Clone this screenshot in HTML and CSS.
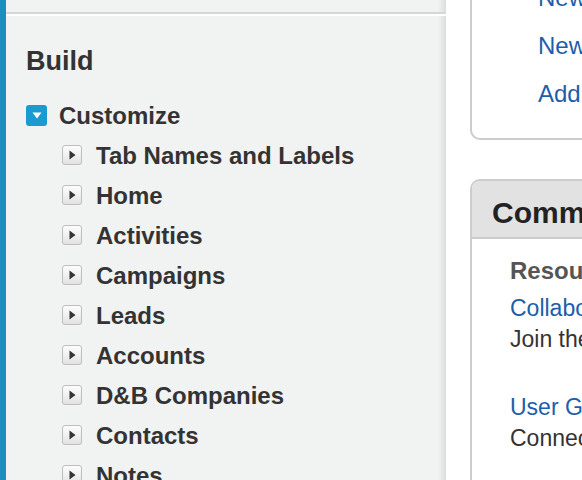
FILE: index.html
```html
<!DOCTYPE html>
<html>
<head>
<meta charset="utf-8">
<link rel="stylesheet" href="styles.css">
</head>
<body>
<div class="page">
  <div class="stripe"></div>
  <aside class="sidebar">
    <div class="prev-section"></div>
    <h2 class="build">Build</h2>
    <div class="group">
      <div class="group-row">
        <span class="toggle-open"><svg width="10" height="7" viewBox="0 0 10 7"><path d="M0.5 0.5 L9.5 0.5 L5 6.5 Z" fill="#fff"/></svg></span>
        <span class="group-label">Customize</span>
      </div>
      <ul class="items">
        <li class="item"><span class="toggle"><svg width="7" height="10" viewBox="0 0 7 10"><path d="M0.5 0.5 L6.5 5 L0.5 9.5 Z" fill="#333"/></svg></span><span>Tab Names and Labels</span></li>
        <li class="item"><span class="toggle"><svg width="7" height="10" viewBox="0 0 7 10"><path d="M0.5 0.5 L6.5 5 L0.5 9.5 Z" fill="#333"/></svg></span><span>Home</span></li>
        <li class="item"><span class="toggle"><svg width="7" height="10" viewBox="0 0 7 10"><path d="M0.5 0.5 L6.5 5 L0.5 9.5 Z" fill="#333"/></svg></span><span>Activities</span></li>
        <li class="item"><span class="toggle"><svg width="7" height="10" viewBox="0 0 7 10"><path d="M0.5 0.5 L6.5 5 L0.5 9.5 Z" fill="#333"/></svg></span><span>Campaigns</span></li>
        <li class="item"><span class="toggle"><svg width="7" height="10" viewBox="0 0 7 10"><path d="M0.5 0.5 L6.5 5 L0.5 9.5 Z" fill="#333"/></svg></span><span>Leads</span></li>
        <li class="item"><span class="toggle"><svg width="7" height="10" viewBox="0 0 7 10"><path d="M0.5 0.5 L6.5 5 L0.5 9.5 Z" fill="#333"/></svg></span><span>Accounts</span></li>
        <li class="item"><span class="toggle"><svg width="7" height="10" viewBox="0 0 7 10"><path d="M0.5 0.5 L6.5 5 L0.5 9.5 Z" fill="#333"/></svg></span><span>D&amp;B Companies</span></li>
        <li class="item"><span class="toggle"><svg width="7" height="10" viewBox="0 0 7 10"><path d="M0.5 0.5 L6.5 5 L0.5 9.5 Z" fill="#333"/></svg></span><span>Contacts</span></li>
        <li class="item"><span class="toggle"><svg width="7" height="10" viewBox="0 0 7 10"><path d="M0.5 0.5 L6.5 5 L0.5 9.5 Z" fill="#333"/></svg></span><span>Notes</span></li>
      </ul>
    </div>
  </aside>
  <main class="main">
    <section class="card quick">
      <a class="quick-link" href="#">New User</a>
      <a class="quick-link" href="#">New Custom Object</a>
      <a class="quick-link" href="#">Add Fields</a>
    </section>
    <section class="card community">
      <header class="card-head">Community</header>
      <div class="card-body">
        <h3 class="res-title">Resources</h3>
        <div class="entry">
          <a class="entry-link" href="#">Collaboration Community</a>
          <div class="entry-desc">Join the conversation</div>
        </div>
        <div class="entry">
          <a class="entry-link" href="#">User Groups</a>
          <div class="entry-desc">Connect with other users</div>
        </div>
      </div>
    </section>
  </main>
</div>
</body>
</html>
```

FILE: styles.css
```css
html, body {
  margin: 0;
  padding: 0;
  background: #fff;
  overflow: hidden;
}
body {
  font-family: "Liberation Sans", Arial, sans-serif;
  color: #333;
  width: 582px;
  height: 480px;
}
.page {
  display: flex;
  align-items: flex-start;
  height: 480px;
}
.stripe {
  width: 6px;
  flex: 0 0 6px;
  align-self: stretch;
  background: #1b8ebd;
}
.sidebar {
  flex: 0 0 440px;
  align-self: stretch;
  background: linear-gradient(to right, #f1f2f2 0, #f1f2f2 432px, #e9eaea 435px, #dcdcdc 440px);
  padding-left: 20px;
  box-sizing: border-box;
}
.prev-section {
  height: 12px;
  margin-left: -20px;
  border-bottom: 2px solid #d6d6d6;
  box-shadow: 0 2px 0 #fff;
}
.build {
  margin: 31px 0 0 0;
  font-size: 27px;
  line-height: 32px;
  font-weight: bold;
  color: #333;
}
.group {
  margin-top: 19px;
}
.group-row {
  display: flex;
  align-items: center;
  height: 40px;
}
.toggle-open {
  width: 21px;
  height: 21px;
  border-radius: 3px;
  background: #1a9ad0;
  display: flex;
  align-items: center;
  justify-content: center;
  margin-right: 12px;
  margin-top: -2px;
}
.toggle-open svg { margin-top: 1px; }
.group-label {
  font-size: 24px;
  font-weight: bold;
}
.items {
  list-style: none;
  margin: 0;
  padding: 0 0 0 36px;
}
.item {
  display: flex;
  align-items: center;
  height: 40px;
  font-size: 24px;
  font-weight: bold;
  white-space: nowrap;
}
.toggle {
  width: 18px;
  height: 18px;
  border: 1px solid #bdbdbd;
  border-radius: 3px;
  background: linear-gradient(#fdfdfd, #e2e2e2);
  display: flex;
  align-items: center;
  justify-content: center;
  margin-right: 14px;
  margin-top: -3px;
}
.toggle svg { margin-left: 1px; }
.main {
  margin-left: 24px;
  width: 600px;
  flex: 0 0 600px;
  margin-top: -46px;
}
.card {
  border: 2px solid #cccccc;
  border-right: none;
  border-radius: 10px 0 0 10px;
  background: #fff;
}
.quick {
  display: flex;
  flex-direction: column;
  padding: 20px 0 20px 66px;
  border-top: none;
  border-radius: 0 0 0 10px;
}
.quick-link {
  font-size: 24px;
  line-height: 48px;
  color: #1b5eab;
  text-decoration: none;
  white-space: nowrap;
}
.community {
  margin-top: 39px;
  border-bottom: none;
  border-radius: 10px 0 0 0;
}
.card-head {
  background: #e2e2e2;
  border-radius: 8px 0 0 0;
  border-bottom: 2px solid #cccccc;
  height: 56px;
  line-height: 64px;
  padding-left: 20px;
  font-size: 30px;
  font-weight: bold;
  color: #222;
  white-space: nowrap;
}
.card-body {
  padding: 17px 0 40px 38px;
}
.res-title {
  margin: 0;
  font-size: 24px;
  line-height: 30px;
  font-weight: bold;
  color: #555;
}
.entry {
  margin-top: 7px;
  margin-bottom: 37px;
}
.entry-link {
  display: block;
  font-size: 23px;
  line-height: 31px;
  color: #1b5eab;
  text-decoration: none;
  white-space: nowrap;
}
.entry-desc {
  font-size: 23px;
  line-height: 31px;
  color: #333;
  white-space: nowrap;
}
```
